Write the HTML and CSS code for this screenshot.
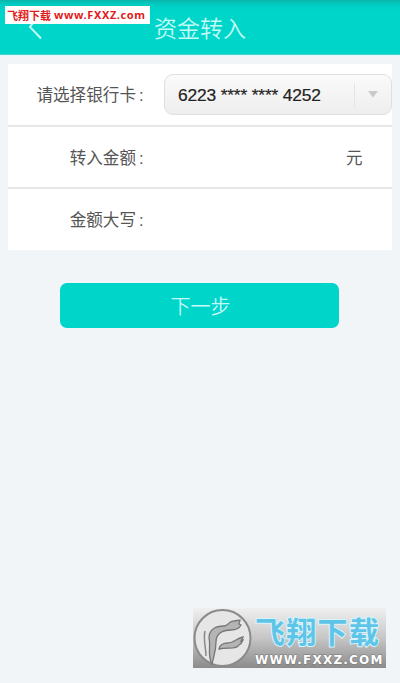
FILE: index.html
```html
<!DOCTYPE html>
<html lang="zh-CN">
<head>
<meta charset="utf-8">
<meta name="viewport" content="width=device-width, initial-scale=1">
<title>资金转入</title>
<link rel="stylesheet" href="styles.css">
</head>
<body>
<header class="topbar">
  <svg class="back" viewBox="0 0 14 24"><path d="M5 7 2 11l11 11.5"/></svg>
  <h1 class="title">资金转入</h1>
</header>
<main class="content">
  <section class="form">
    <div class="row">
      <span class="label">请选择银行卡<i class="colon">:</i></span>
      <div class="select">
        <span class="card">6223 **** **** 4252</span>
        <span class="drop"><svg viewBox="0 0 10 7"><path d="M0 0h10L5 6.5z"/></svg></span>
      </div>
    </div>
    <div class="row">
      <span class="label">转入金额<i class="colon">:</i></span>
      <span class="unit">元</span>
    </div>
    <div class="row">
      <span class="label">金额大写<i class="colon">:</i></span>
    </div>
  </section>
  <button class="next" type="button">下一步</button>
</main>
<div class="tag"><span class="tag-cn">飞翔下载</span><span class="tag-url">www.FXXZ.com</span></div>
<div class="mark">
  <svg class="emblem" viewBox="0 0 60 60">
    <circle class="disc" cx="29.5" cy="30" r="28"/>
    <path class="wing" d="M19 56C14 48 18 38 16 30c0-8 6-12 15-12 5 0 4-5 10-5l6-1-1 4 2 1c-2 4-5 5-10 5-9 0-15 4-15 12 0 9-2 13-4 22z"/>
    <path class="wing" d="M26 41c1-5 4-6 9-6 6 0 9-5 15-6l-2 4 2-1c-1 3-2 4-4 5-3 5-11 2-20 4z"/>
    <path class="feather" d="M12 23c-2 8 1 17 1 25"/>
  </svg>
  <div class="words">
    <span class="brand">飞翔下载</span>
    <span class="site">WWW.FXXZ.COM</span>
  </div>
</div>
</body>
</html>
```
FILE: styles.css
```css
* { box-sizing: border-box; }
body {
  margin: 0;
  min-height: 683px;
  position: relative;
  background: #f1f5f8;
  color: #555;
  font-family: "Liberation Sans", "Noto Sans CJK SC", sans-serif;
}
.topbar {
  height: 55px;
  display: flex;
  align-items: center;
  justify-content: center;
  position: relative;
  background: linear-gradient(#08b5aa 0, #02cbc0 4px, #00d5ca 10px);
  border-bottom: 1px solid #4fd0cb;
  box-shadow: 0 1px 1px #d9fbf9;
}
.back {
  position: absolute;
  left: 28px;
  top: 16px;
  width: 14px;
  height: 24px;
  fill: none;
  stroke: #c4fbf7;
  stroke-width: 2;
}
.title {
  margin: 0;
  font-size: 23px;
  line-height: 34px;
  font-weight: 350;
  color: #c4fbf7;
  font-family: "Noto Sans CJK SC", sans-serif;
}
.content {
  padding: 9px 8px 0;
  display: flex;
  flex-direction: column;
}
.form { background: #fff; }
.row {
  height: 61px;
  display: flex;
  align-items: center;
}
.row + .row { border-top: 2px solid #e7e7e7; }
.row:nth-child(2) { height: 62px; }
.row:nth-child(3) { height: 63px; }
.label {
  width: 137px;
  padding-top: 3px;
  display: flex;
  justify-content: flex-end;
  font-size: 16.6px;
  line-height: 24px;
}
.colon {
  width: 9px;
  padding-left: 3px;
  font-style: normal;
}
.select {
  width: 228px;
  height: 41px;
  margin-left: 19px;
  padding-left: 13px;
  display: flex;
  align-items: center;
  justify-content: space-between;
  border: 1px solid #e0e0e0;
  border-radius: 9px;
  background: linear-gradient(#fafafa, #eee);
}
.card {
  padding-top: 2px;
  font-size: 17.4px;
  letter-spacing: -0.17px;
  color: #222;
  -webkit-text-stroke: 0.2px #222;
  white-space: nowrap;
}
.drop {
  width: 37px;
  height: 24px;
  display: flex;
  align-items: center;
  justify-content: center;
  border-left: 1px solid #e4e4e4;
}
.drop svg { width: 10px; height: 7px; fill: #c9c9c9; }
.unit {
  margin-left: auto;
  margin-right: 29.5px;
  padding-top: 4px;
  font-size: 16.6px;
  line-height: 22px;
}
.next {
  width: 279px;
  height: 45px;
  margin: 33px 0 0 52px;
  padding: 0 0 0 2px;
  border: 0;
  border-radius: 7px;
  background: #00d5ca;
  color: #c4fbf7;
  font: 350 20px/43px "Noto Sans CJK SC", sans-serif;
}
.tag {
  position: absolute;
  left: 5px;
  top: 6px;
  width: 145px;
  height: 18px;
  padding-left: 2px;
  display: flex;
  align-items: center;
  gap: 3px;
  background: #fff;
  color: #e21b1b;
  white-space: nowrap;
}
.tag-cn { font: 700 11px/18px "Noto Sans CJK SC", sans-serif; }
.tag-url {
  font: 700 11px/20px "Noto Sans", sans-serif;
  letter-spacing: 0.6px;
}
.mark {
  position: absolute;
  left: 193px;
  top: 608px;
  width: 193px;
  height: 60px;
  display: flex;
  background: linear-gradient(#f0f0f0, #c6c6c6 50%, #8b8b8b);
}
.emblem { flex: none; width: 60px; height: 60px; }
.disc { fill: #e6e6e6; stroke: #8a8a8a; stroke-width: 2; }
.wing { fill: #b4b4b4; stroke: #777; stroke-width: 1.3; }
.feather { fill: none; stroke: #888; stroke-width: 1.5; }
.words {
  display: flex;
  flex-direction: column;
  white-space: nowrap;
}
.brand {
  height: 44px;
  padding-left: 2px;
  font: 700 30px/44px "Noto Sans CJK SC", sans-serif;
  letter-spacing: 1.3px;
  color: #5ec5e8;
  -webkit-text-stroke: 2px #d9f4fc;
  paint-order: stroke fill;
}
.site {
  height: 16px;
  padding-left: 2px;
  font: 700 12px/16px "DejaVu Sans", sans-serif;
  letter-spacing: 1.2px;
  color: #fff;
  -webkit-text-stroke: 1px #777;
  paint-order: stroke fill;
}
```
